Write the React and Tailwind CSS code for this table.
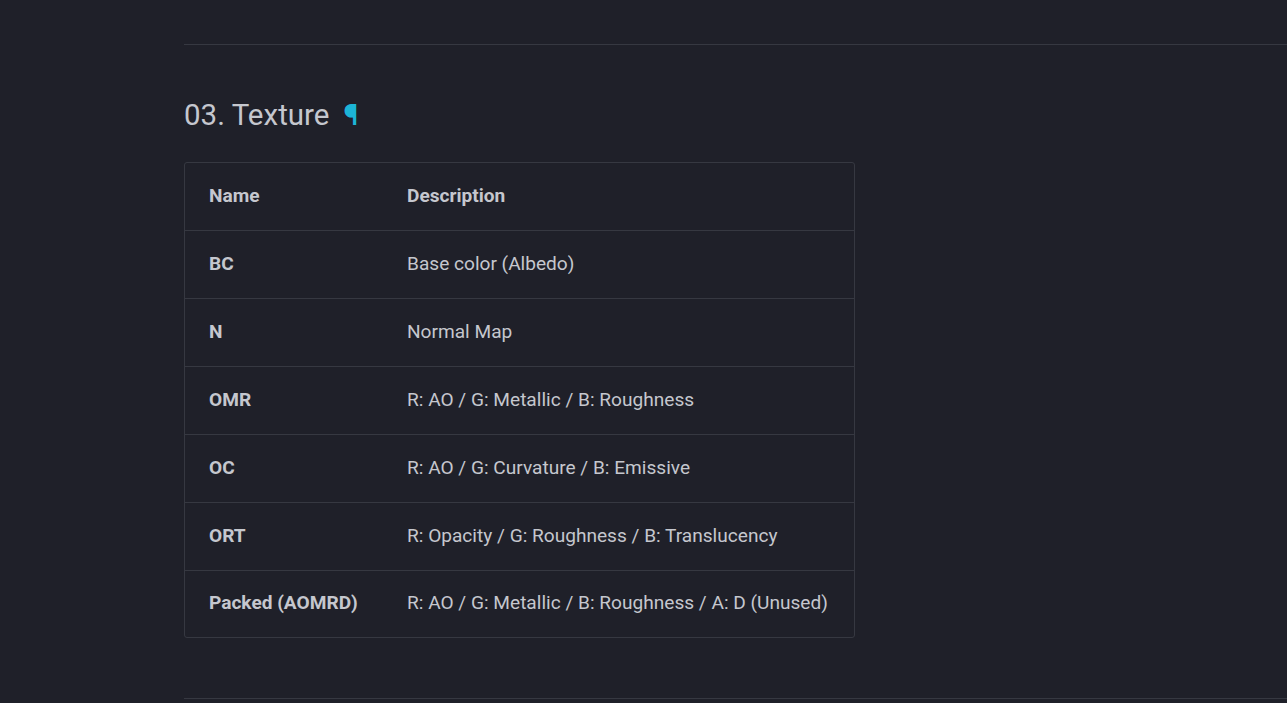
import React from 'react';

const rows = [
  { name: 'BC', desc: 'Base color (Albedo)' },
  { name: 'N', desc: 'Normal Map' },
  { name: 'OMR', desc: 'R: AO / G: Metallic / B: Roughness' },
  { name: 'OC', desc: 'R: AO / G: Curvature / B: Emissive' },
  { name: 'ORT', desc: 'R: Opacity / G: Roughness / B: Translucency' },
  { name: 'Packed (AOMRD)', desc: 'R: AO / G: Metallic / B: Roughness / A: D (Unused)' },
];

export default function App() {
  return (
    <div className="min-h-screen bg-[#1f2029] text-[#c5c7ce] font-['Roboto',sans-serif] overflow-hidden">
      <div className="pl-[184px] pt-[44px]">
        <hr className="border-0 border-t border-[#363841]" />
        <h2 className="mt-[51px] flex items-center text-[29.5px] leading-[38px] text-[#c5c7ce]">
          03. Texture
          <span className="ml-[14px] text-[30px] font-bold text-[#1cb5d6]">¶</span>
        </h2>
        <div className="mt-[28px] w-[671px] rounded-[3px] border border-[#363841]">
          <table className="w-full table-fixed border-collapse text-[19.1px]">
            <thead>
              <tr className="h-[67px] border-b border-[#363841]">
                <th className="w-[222px] pl-[24px] text-left font-bold">Name</th>
                <th className="pr-[24px] text-left font-bold">Description</th>
              </tr>
            </thead>
            <tbody>
              {rows.map((r, i) => (
                <tr
                  key={r.name}
                  className={i < rows.length - 1 ? 'h-[68px] border-b border-[#363841]' : 'h-[67px]'}
                >
                  <td className="pl-[24px] font-bold">{r.name}</td>
                  <td className="pr-[16px] whitespace-nowrap">{r.desc}</td>
                </tr>
              ))}
            </tbody>
          </table>
        </div>
        <hr className="mt-[60px] border-0 border-t border-[#363841]" />
      </div>
    </div>
  );
}
